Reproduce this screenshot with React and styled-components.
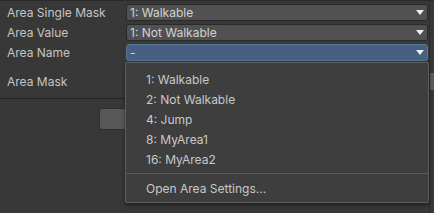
import styled, { createGlobalStyle } from "styled-components";

const Global = createGlobalStyle`
    html, body {
        margin: 0;
        padding: 0;
        background-color: #383838;
    }
    body {
        font-family: Inter, "Noto Sans", sans-serif;
        font-size: 12px;
        color: #c4c4c4;
    }
`

const Page = styled.div`
    width: 434px;
    height: 213px;
    position: relative;
    display: flex;
    border-top: 1px solid #2a2a2a;
    box-sizing: border-box;
    overflow: hidden;
`
const Inspector = styled.div`
    width: 430px;
    display: flex;
    flex-direction: column;
    padding-top: 3px;
`
const Row = styled.div`
    height: 17px;
    display: flex;
    align-items: center;
    margin-bottom: 3px;
    margin-top: ${p => p.$top || 0}px;
`
const Label = styled.div`
    width: 126px;
    padding-left: 7px;
    box-sizing: border-box;
    white-space: nowrap;
`
const Field = styled.div`
    flex: 1;
    height: 17px;
    box-sizing: border-box;
    margin-right: 1px;
    border-radius: 3px;
    border: 1px solid ${p => p.$active ? "#5a7494" : "#2a2a2a"};
    background-color: ${p => p.$active ? "#456080" : "#515151"};
    color: #d2d2d2;
    display: flex;
    align-items: center;
    justify-content: space-between;
    padding: 0 3px 0 3px;
`
const Arrow = styled.span`
    width: 0;
    height: 0;
    border-left: 4.5px solid transparent;
    border-right: 4.5px solid transparent;
    border-top: 5px solid #eeeeee;
`
const Divider = styled.div`
    height: 1px;
    background-color: #232323;
    margin-top: 5px;
`
const ButtonRow = styled.div`
    display: flex;
    padding-top: 9px;
`
const Button = styled.div`
    width: 200px;
    height: 22px;
    margin-left: 99px;
    border-radius: 3px;
    background-color: #585858;
    border: 1px solid #2f2f2f;
    box-sizing: border-box;
`
const ScrollTrack = styled.div`
    width: 4px;
    border-left: 1px solid #2c2c2c;
    padding-top: 72px;
`
const ScrollThumb = styled.div`
    height: 17px;
    background-color: #5c5c5c;
`

// dropdown menu over the fields
const Menu = styled.div`
    position: absolute;
    left: 125px;
    top: 61px;
    width: 304px;
    height: 141px;
    box-sizing: border-box;
    background-color: #3e3e3e;
    border: 1px solid #5e5e5e;
    border-radius: 2px;
    box-shadow: 0px 2px 4px rgba(0,0,0,0.45);
    padding-top: 6px;
    display: flex;
    flex-direction: column;
`
const MenuItem = styled.div`
    height: 20px;
    display: flex;
    align-items: center;
    padding-left: 20px;
    color: #c8c8c8;
    white-space: nowrap;
`
const MenuSeparator = styled.div`
    height: 1px;
    background-color: #595959;
    margin: 4px 0 4px 0;
`

const fields = [
    { label: "Area Single Mask", value: "1: Walkable" },
    { label: "Area Value", value: "1: Not Walkable" },
    { label: "Area Name", value: "-", active: true },
]

const items = ["1: Walkable", "2: Not Walkable", "4: Jump", "8: MyArea1", "16: MyArea2"]

const App = () => {
    return (
        <Page>
            <Global />
            <Inspector>
                {fields.map(f => (
                    <Row key={f.label}>
                        <Label>{f.label}</Label>
                        <Field $active={f.active}>
                            <span>{f.value}</span>
                            <Arrow />
                        </Field>
                    </Row>
                ))}
                <Row $top={9}>
                    <Label>Area Mask</Label>
                    <Field>
                        <span />
                        <Arrow />
                    </Field>
                </Row>
                <Divider />
                <ButtonRow>
                    <Button />
                </ButtonRow>
            </Inspector>
            <ScrollTrack>
                <ScrollThumb />
            </ScrollTrack>
            <Menu>
                {items.map(i => <MenuItem key={i}>{i}</MenuItem>)}
                <MenuSeparator />
                <MenuItem>Open Area Settings...</MenuItem>
            </Menu>
        </Page>
    )
}
export default App
